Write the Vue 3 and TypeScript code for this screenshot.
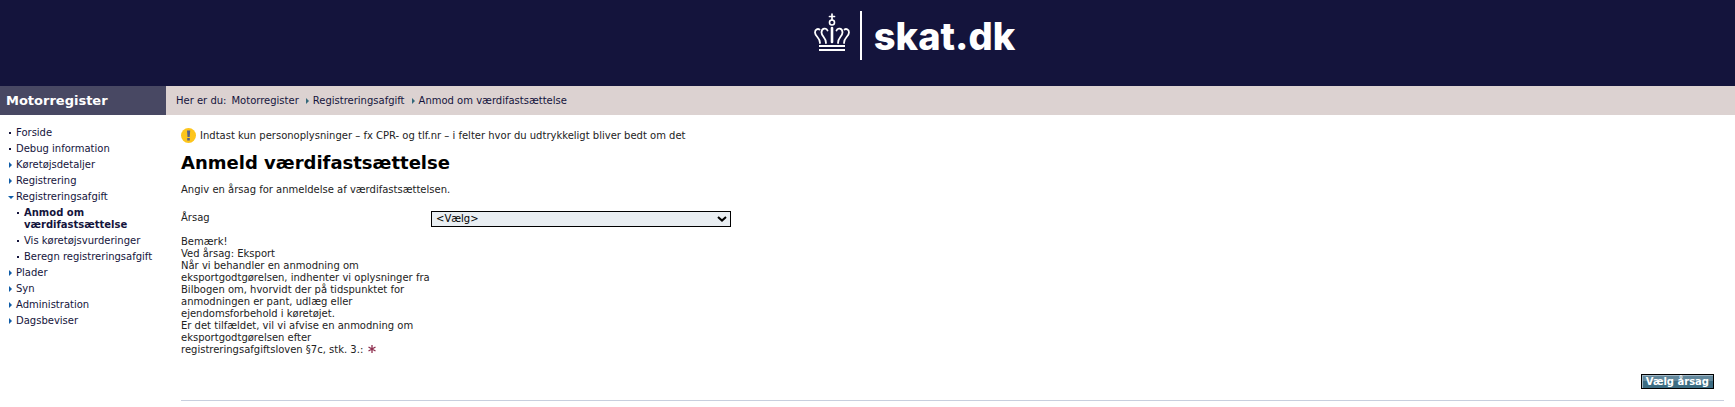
<script setup lang="ts">
import { ref } from 'vue'

interface MenuItem {
  label: string
  kind: 'leaf' | 'closed' | 'open'
  active?: boolean
  children?: MenuItem[]
}

const menu: MenuItem[] = [
  { label: 'Forside', kind: 'leaf' },
  { label: 'Debug information', kind: 'leaf' },
  { label: 'Køretøjsdetaljer', kind: 'closed' },
  { label: 'Registrering', kind: 'closed' },
  {
    label: 'Registreringsafgift',
    kind: 'open',
    children: [
      { label: 'Anmod om værdifastsættelse', kind: 'leaf', active: true },
      { label: 'Vis køretøjsvurderinger', kind: 'leaf' },
      { label: 'Beregn registreringsafgift', kind: 'leaf' },
    ],
  },
  { label: 'Plader', kind: 'closed' },
  { label: 'Syn', kind: 'closed' },
  { label: 'Administration', kind: 'closed' },
  { label: 'Dagsbeviser', kind: 'closed' },
]

const crumbs: string[] = ['Motorregister', 'Registreringsafgift', 'Anmod om værdifastsættelse']
const reason = ref('')
</script>

<template>
  <div class="page">
    <header class="top">
      <a href="#" class="logo">
        <svg class="crown" viewBox="0 0 36 40" aria-hidden="true">
          <g fill="none" stroke="#fff" stroke-linecap="round">
            <path d="M18 1v6M15.500 3.500h5" stroke-width="1.700" />
            <circle cx="18" cy="9.500" r="2.500" stroke-width="1.600" />
            <path d="M18 15v14" stroke-width="2.600" />
            <path d="M6 30C6.500 25 1 23.500 1 19.500C1 16 4 15.500 5.500 16.500" stroke-width="1.800" />
            <path d="M30 30C29.500 25 35 23.500 35 19.500C35 16 32 15.500 30.500 16.500" stroke-width="1.800" />
            <path d="M12 30C12.500 25 7.500 23.500 7.500 19.500C7.500 15 12.500 14.500 13.500 17.500" stroke-width="1.800" />
            <path d="M24 30C23.500 25 28.500 23.500 28.500 19.500C28.500 15 23.500 14.500 22.500 17.500" stroke-width="1.800" />
          </g>
          <path d="M5 32h26v2H5zM5 36h26v2H5z" fill="#fff" />
        </svg>
        <span class="rule"></span>
        <span class="brand">skat.dk</span>
      </a>
    </header>

    <div class="bar">
      <div class="bar-title">Motorregister</div>
      <nav class="crumbs" aria-label="Brødkrumme">
        <span class="crumb-intro">Her er du:</span>
        <template v-for="(crumb, i) in crumbs" :key="crumb">
          <span v-if="i > 0" class="crumb-arrow"></span>
          <a href="#">{{ crumb }}</a>
        </template>
      </nav>
    </div>

    <div class="body">
      <nav class="side" aria-label="Menu">
        <ul>
          <li v-for="item in menu" :key="item.label">
            <a href="#" :class="item.kind"><i class="mark"></i><span>{{ item.label }}</span></a>
            <ul v-if="item.children" class="sub">
              <li v-for="child in item.children" :key="child.label">
                <a href="#" :class="[child.kind, { active: child.active }]"><i class="mark"></i><span>{{ child.label }}</span></a>
              </li>
            </ul>
          </li>
        </ul>
      </nav>

      <main class="main">
        <p class="notice">
          <svg viewBox="0 0 15 15" aria-hidden="true">
            <circle cx="7.500" cy="7.500" r="7.500" fill="#fdc51c" />
            <path d="M6 2.500h3.200L8.700 9H6.500zM6.200 10h2.600v2.500H6.200z" fill="#56618c" />
          </svg>
          Indtast kun personoplysninger – fx CPR- og tlf.nr – i felter hvor du udtrykkeligt bliver bedt om det
        </p>
        <h1>Anmeld værdifastsættelse</h1>
        <p class="lead">Angiv en årsag for anmeldelse af værdifastsættelsen.</p>
        <form @submit.prevent>
          <div class="field">
            <label for="reason">
              Årsag<br /><br />
              Bemærk!<br />
              Ved årsag: Eksport<br />
              Når vi behandler en anmodning om eksportgodtgørelsen, indhenter vi oplysninger fra Bilbogen om, hvorvidt der på tidspunktet for anmodningen er pant, udlæg eller ejendomsforbehold i køretøjet.<br />
              Er det tilfældet, vil vi afvise en anmodning om eksportgodtgørelsen efter registreringsafgiftsloven §7c, stk. 3.:
              <svg class="required" viewBox="0 0 8 8" aria-hidden="true"><path d="M4 0v8M0.500 2l7 4M0.500 6l7-4" stroke="#8f3050" stroke-width="1.300" /></svg>
            </label>
            <div class="select-box">
              <select id="reason" v-model="reason">
                <option value="">&lt;Vælg&gt;</option>
                <option value="eksport">Eksport</option>
              </select>
              <svg viewBox="0 0 10 6" aria-hidden="true"><path d="M1 1l4 3.600L9 1" fill="none" stroke="#000" stroke-width="2" /></svg>
            </div>
          </div>
          <div class="actions"><button type="submit">Vælg årsag</button></div>
        </form>
      </main>
    </div>
  </div>
</template>

<style>
body {
  margin: 0;
  background: #fff;
}
</style>

<style scoped>
.page {
  font: 10px/12px Verdana, "DejaVu Sans", sans-serif;
  color: #222;
}
a {
  color: #14143c;
  text-decoration: none;
}
.top {
  display: flex;
  justify-content: center;
  height: 86px;
  background: #14143c;
}
.logo {
  display: flex;
  align-items: center;
  height: 49px;
  margin: 11px 0 0 94px;
  color: #fff;
}
.crown {
  width: 36px;
  height: 40px;
  margin-bottom: 6px;
}
.rule {
  width: 2px;
  height: 49px;
  margin: 0 12px 0 10px;
  background: #fff;
}
.brand {
  font: 800 38px/46px Inter, "Open Sans", sans-serif;
}
.bar {
  display: flex;
  height: 29px;
  line-height: 29px;
  background: #dcd2d1;
}
.bar-title {
  flex: 0 0 160px;
  padding-left: 6px;
  background: #484863;
  color: #fff;
  font-size: 13px;
  font-weight: bold;
}
.crumbs {
  display: flex;
  align-items: center;
  padding-left: 10px;
  color: #14143c;
}
.crumb-intro {
  margin-right: 5px;
}
.crumb-arrow {
  margin: 0 4px 0 7px;
  border: 3px solid transparent;
  border-left-color: #35687a;
  border-right-width: 0;
}
.body {
  display: flex;
}
.side {
  flex: 0 0 166px;
  padding-top: 10px;
}
ul {
  margin: 0;
  padding: 0;
  list-style: none;
}
.side a {
  display: flex;
  padding: 2px 0 2px 8px;
}
.side .sub a {
  padding-left: 16px;
}
.mark {
  flex: 0 0 8px;
  height: 12px;
  display: flex;
  align-items: center;
}
.mark::before {
  content: "";
}
.leaf .mark::before {
  width: 2px;
  height: 2px;
  margin-left: 1px;
  background: #14143c;
}
.closed .mark::before {
  margin-left: 1px;
  border: 3px solid transparent;
  border-left-color: #0f5ca8;
  border-right-width: 0;
}
.open .mark::before {
  border: 3px solid transparent;
  border-top-color: #0f5ca8;
  border-bottom-width: 0;
}
.active {
  font-weight: bold;
}
.main {
  flex: 1;
  padding: 13px 11px 0 15px;
}
.notice {
  display: flex;
  align-items: center;
  gap: 4px;
  margin: 0;
}
.notice svg {
  width: 15px;
  height: 15px;
}
h1 {
  margin: 8px 0 9px;
  color: #000;
  font-size: 18px;
  line-height: 24px;
}
.lead {
  margin: 0 0 15px;
}
.field {
  display: flex;
  align-items: flex-start;
}
.field label {
  width: 250px;
  padding-top: 1px;
}
.required {
  width: 8px;
  height: 8px;
  margin-left: 2px;
}
.select-box {
  display: grid;
  align-items: center;
  width: 300px;
}
.select-box > * {
  grid-area: 1 / 1;
}
.select-box svg {
  justify-self: end;
  width: 10px;
  height: 6px;
  margin-right: 4px;
  pointer-events: none;
}
select {
  appearance: none;
  width: 100%;
  height: 16px;
  padding: 0 4px;
  border: 1px solid #000;
  border-radius: 0;
  background: #e9eef2;
  color: #000;
  font: inherit;
}
.actions {
  display: flex;
  justify-content: flex-end;
  margin-top: 18px;
  padding: 0 10px 11px 0;
  border-bottom: 1px solid #c8cfde;
}
button {
  height: 15px;
  padding: 0 4px;
  border: 1px solid #000;
  background: linear-gradient(#62889c 50%, #3c6c82 50%);
  box-shadow: inset 1px 1px #a3b7c5;
  color: #fff;
  font: bold 10px/12px Verdana, "DejaVu Sans", sans-serif;
}
</style>
